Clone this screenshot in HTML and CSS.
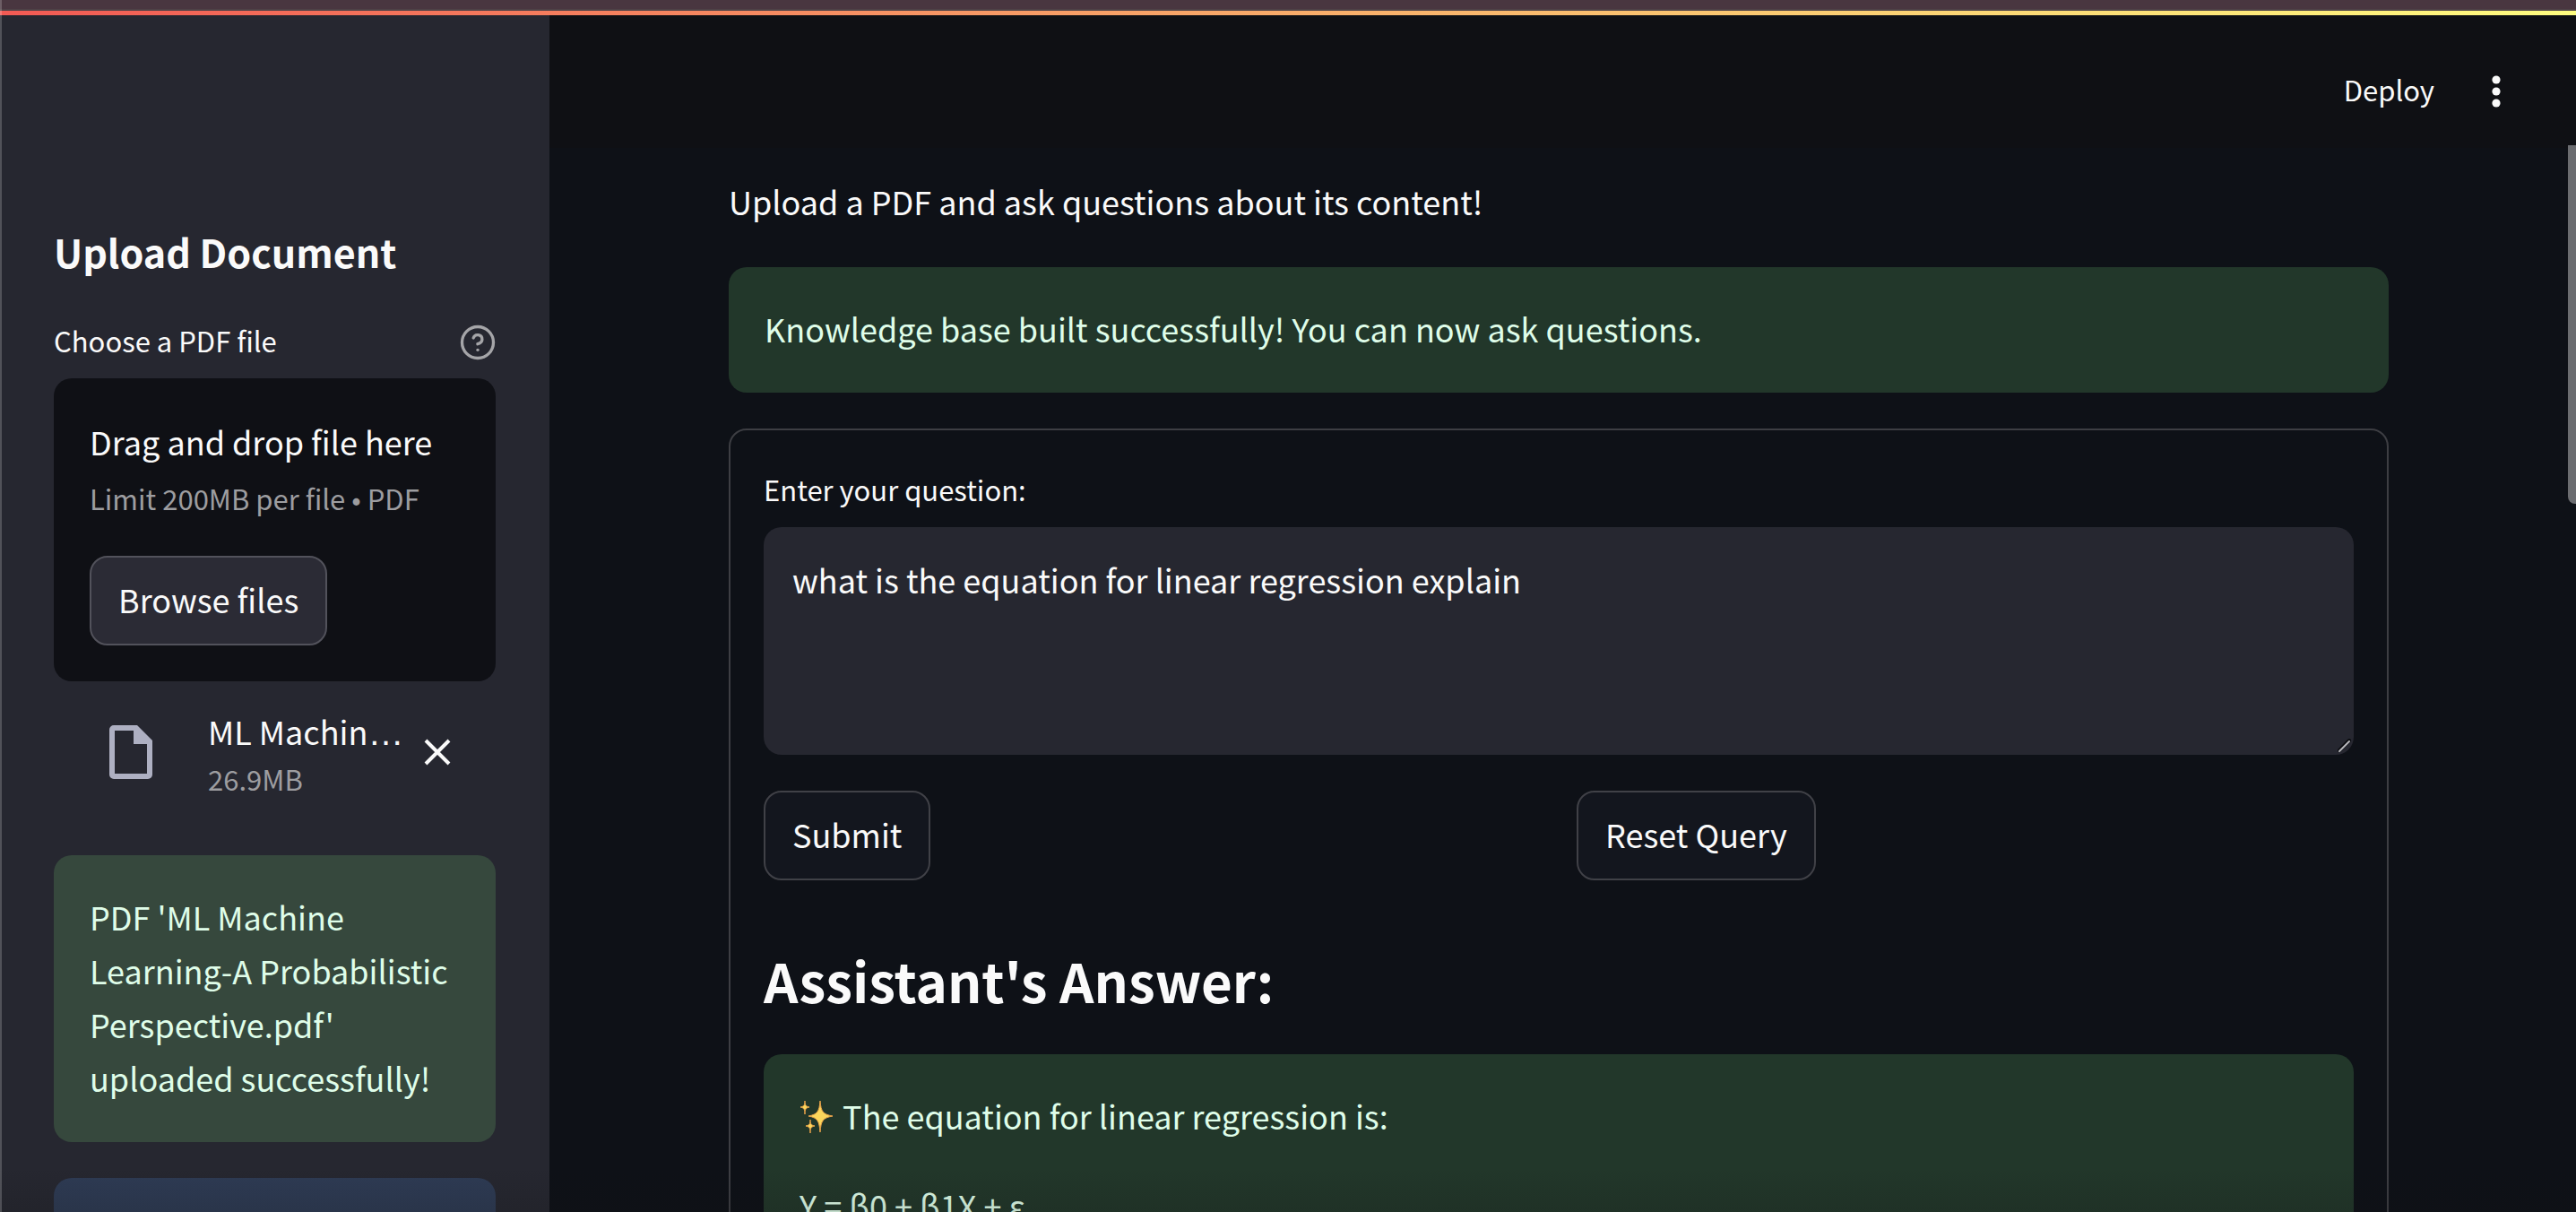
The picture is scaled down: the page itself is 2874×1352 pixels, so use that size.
FILE: index.html
```html
<!DOCTYPE html>
<html lang="en">
<head>
<meta charset="utf-8">
<title>PDF Question Answering</title>
<link rel="stylesheet" href="styles.css">
</head>
<body>
<div class="app">
  <div class="window-strip"></div>
  <div class="decoration"></div>
  <div class="shell">
    <aside class="sidebar">
      <h2 class="sidebar-title">Upload Document</h2>
      <div class="label-row">
        <label class="label" for="pdf">Choose a PDF file</label>
        <button class="icon-button" type="button" aria-label="Help">
          <svg width="40" height="40" viewBox="0 0 24 24" fill="none" stroke="currentColor" stroke-width="2" stroke-linecap="round" stroke-linejoin="round"><circle cx="12" cy="12" r="10.500"/><path d="M9.100 9a3 3 0 0 1 5.830 1c0 2-3 3-3 3"/><path d="M12 17h.01"/></svg>
        </button>
      </div>
      <section class="dropzone">
        <div class="drop-title">Drag and drop file here</div>
        <div class="drop-hint">Limit 200MB per file • PDF</div>
        <button class="button browse" id="pdf" type="button">Browse files</button>
      </section>
      <div class="file">
        <svg class="file-icon" width="48" height="60" viewBox="0 0 48 60"><path fill="currentColor" fill-rule="evenodd" d="M5 0h26l17 17v38a5 5 0 0 1-5 5H5a5 5 0 0 1-5-5V5a5 5 0 0 1 5-5zM6 6v48h36V21H27V6z"/></svg>
        <div class="file-info">
          <div class="file-name">ML Machin<span class="dots">…</span></div>
          <div class="file-size">26.9MB</div>
        </div>
        <button class="icon-button" type="button" aria-label="Remove file">
          <svg width="30" height="30" viewBox="0 0 30 30" stroke="currentColor" stroke-width="4"><path d="M2 2l26 26M28 2L2 28"/></svg>
        </button>
      </div>
      <div class="alert alert-side">PDF 'ML Machine Learning-A Probabilistic Perspective.pdf' uploaded successfully!</div>
      <div class="alert alert-info"></div>
    </aside>
    <div class="page">
      <header class="header">
        <button class="deploy" type="button">Deploy</button>
        <button class="icon-button" type="button" aria-label="Main menu">
          <svg width="10" height="36" viewBox="0 0 10 36" fill="currentColor"><circle cx="5" cy="5" r="4.600"/><circle cx="5" cy="18" r="4.600"/><circle cx="5" cy="31" r="4.600"/></svg>
        </button>
      </header>
      <main class="main">
        <p class="intro">Upload a PDF and ask questions about its content!</p>
        <div class="alert">Knowledge base built successfully! You can now ask questions.</div>
        <form class="form">
          <label class="label" for="question">Enter your question:</label>
          <div class="field">
            <textarea class="question" id="question">what is the equation for linear regression explain</textarea>
            <svg class="grip" width="16" height="16" viewBox="0 0 16 16" fill="none" stroke-linecap="round"><path stroke="#0b0c10" stroke-width="4" d="M2 13L13 2"/><path stroke="#b9b9bd" stroke-width="2" d="M2 14L13 3"/></svg>
          </div>
          <div class="columns">
            <div><button class="button" type="button">Submit</button></div>
            <div><button class="button" type="button">Reset Query</button></div>
          </div>
          <h2 class="answer-title">Assistant's Answer:</h2>
          <div class="alert answer">
            <p><svg class="sparkles" width="38" height="38" viewBox="0 0 38 38" fill="#fbd65b" stroke="#e9a24a" stroke-width="1"><path d="M23 1c1 12 3 15 14 17c-11 2-13 5-14 18c-1-13-3-16-13-18c10-2 12-5 13-17z"/><path d="M6 1c0 5 1 6 5 7c-4 1-5 2-5 8c0-6-1-7-5-8c4-1 5-2 5-7z"/><path d="M12 22c0 5 1 6 5 7c-4 1-5 2-5 8c0-6-1-7-5-8c4-1 5-2 5-7z"/></svg> The equation for linear regression is:</p>
            <p>Y = β0 + β1X + ε</p>
          </div>
        </form>
      </main>
      <div class="scroll-thumb"></div>
    </div>
  </div>
  <div class="bottom-shade"></div>
</div>
</body>
</html>
```
FILE: styles.css
```css
* { box-sizing: border-box; }

body {
  margin: 0;
  background: #0e1117;
  color: #fafafa;
  font-family: "Noto Sans CJK JP", "Source Sans Pro", sans-serif;
  font-size: 36px;
  line-height: 60px;
}

h2, p { margin: 0; }

button {
  font: inherit;
  color: inherit;
}

svg { display: block; }

.app {
  position: relative;
  display: flex;
  flex-direction: column;
  height: 100vh;
  overflow: hidden;
}

.app::before {
  content: "";
  position: absolute;
  z-index: 2;
  inset: 0 auto 0 0;
  width: 2px;
  background: rgba(255, 255, 255, 0.2);
}

.window-strip {
  flex: none;
  height: 12px;
  background: #493640;
  border-bottom: 2px solid #4e4247;
}

.decoration {
  flex: none;
  height: 5px;
  background: linear-gradient(90deg, #f25a54, #fffd80);
}

.shell {
  display: flex;
  flex: 1;
  min-height: 0;
}

.sidebar {
  flex: none;
  width: 613px;
  padding: 233px 60px 0;
  overflow: hidden;
  background: #262730;
}

.sidebar-title {
  font-size: 43px;
  font-weight: 700;
  line-height: 60px;
}

.label-row {
  display: flex;
  align-items: center;
  justify-content: space-between;
  height: 40px;
  margin: 52px 0 20px;
}

.label {
  display: block;
  padding-bottom: 4px;
  font-size: 31px;
  line-height: 36px;
}

.icon-button {
  display: flex;
  padding: 0;
  border: 0;
  background: none;
}

.label-row .icon-button { color: #a5a5a8; }

.dropzone {
  padding: 40px;
  border-radius: 20px;
  background: #0f1015;
}

.drop-title { line-height: 60px; }

.drop-hint, .file-size {
  color: #9d9da0;
  font-size: 31px;
  line-height: 48px;
}

.drop-hint { margin: 10px 0 40px; }

.button {
  display: block;
  height: 100px;
  padding: 0 30px 4px;
  border: 2px solid #404147;
  border-radius: 20px;
  background: #13161e;
  line-height: 60px;
}

.browse {
  border-color: #52525b;
  background: #2b2b35;
}

.file {
  display: flex;
  align-items: center;
  gap: 20px;
  height: 154px;
  margin-bottom: 40px;
  padding: 4px 50px 0 62px;
}

.file-icon {
  flex: none;
  color: #aeb0c2;
}

.file-info {
  flex: 1;
  min-width: 0;
  padding-left: 42px;
}

.file-name {
  height: 60px;
  white-space: nowrap;
}

.dots {
  font-family: "Liberation Sans", sans-serif;
  font-size: 40px;
  line-height: 40px;
}

.alert {
  padding: 38px 40px 42px;
  border-radius: 20px;
  background: #22372a;
  color: #dffde9;
}

.alert-side { background: #36483d; }

.alert-info {
  height: 140px;
  margin-top: 40px;
  background: #2e3b54;
}

.page {
  position: relative;
  flex: 1;
  min-width: 0;
  overflow: hidden;
}

.header {
  display: flex;
  align-items: center;
  justify-content: flex-end;
  gap: 64px;
  height: 148px;
  padding: 22px 84px 0 0;
  background: #0f1014;
}

.deploy {
  padding: 0 0 4px;
  border: 0;
  background: none;
  font-size: 31px;
  line-height: 56px;
}

.main { padding: 29px 209px 0 200px; }

.intro { margin-bottom: 44px; }

.form {
  margin-top: 40px;
  padding: 48px 37px;
  border: 2px solid #3d3e43;
  border-radius: 20px;
}

.field {
  position: relative;
  margin: 20px 0 40px;
}

.question {
  display: block;
  width: 100%;
  height: 254px;
  padding: 28px 32px;
  border: 0;
  border-radius: 20px;
  outline: 0;
  resize: none;
  background: #262730;
  color: inherit;
  font: inherit;
}

.grip {
  position: absolute;
  right: 2px;
  bottom: 2px;
}

.columns {
  display: grid;
  grid-template-columns: 1fr 1fr;
  gap: 40px;
}

.answer-title {
  margin: 64px 0 36px;
  font-size: 60px;
  font-weight: 700;
  line-height: 94px;
}

.answer p + p { margin-top: 40px; }

.sparkles {
  display: inline-block;
  margin-right: 2px;
  vertical-align: -5px;
}

.scroll-thumb {
  position: absolute;
  top: 145px;
  right: 0;
  width: 9px;
  height: 400px;
  border-radius: 0 0 0 8px;
  background: #6b6c70;
}

.bottom-shade {
  position: absolute;
  inset: auto 0 0;
  height: 50px;
  background: linear-gradient(rgba(17, 17, 17, 0), rgba(17, 17, 17, 0.15));
}
```
